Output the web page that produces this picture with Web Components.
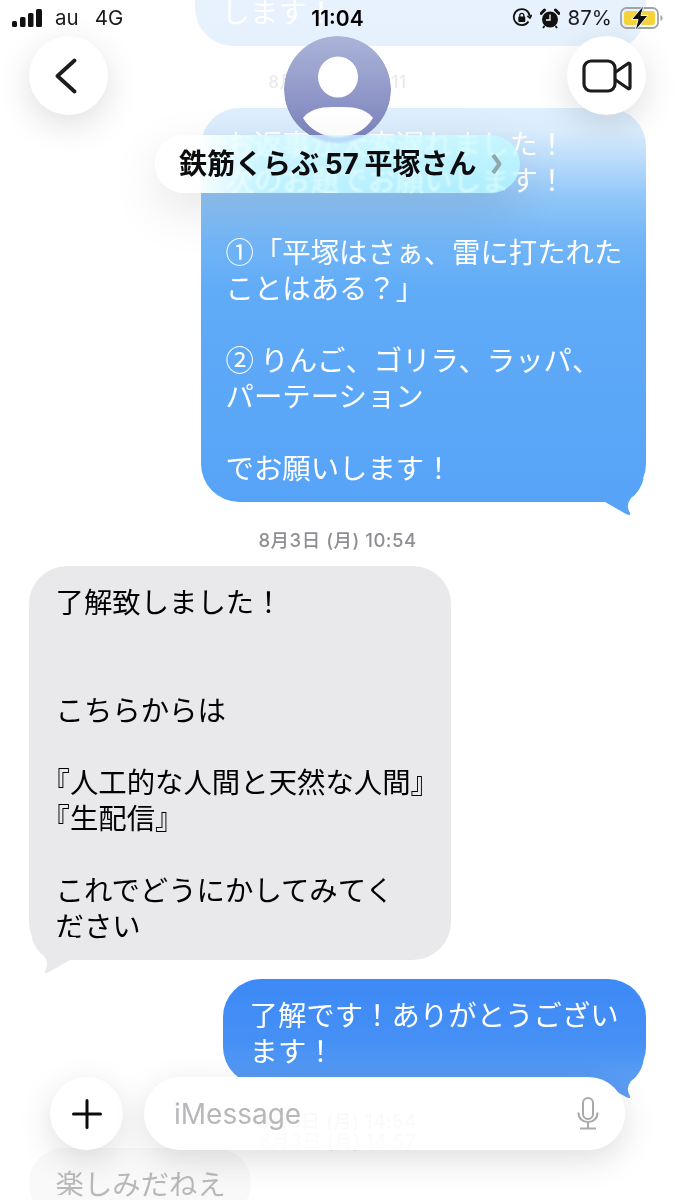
<!DOCTYPE html>
<html lang="ja"><head><meta charset="utf-8"><title>Messages</title>
<style>html,body{margin:0;padding:0;background:#fff;height:1200px;overflow:hidden}</style></head>
<body>
<msg-screen>
  <msg-thread>
    <msg-bubble kind="me" style="--w:451px;--from:#5aa5f7;--to:#5aa5f7">お題の確認をよろしくお願い
します！</msg-bubble>
    <msg-stamp style="--h:62px;--pt:10px;--fs:17px">8月3日 (月) 10:11</msg-stamp>
    <msg-bubble kind="me" style="--w:445px;--pad:24.5px;--from:#68b3f6;--to:#57a3f8">お返事が大変遅れました！
次のお題でお願いします！

①「平塚はさぁ、雷に打たれた
ことはある？」

② りんご、ゴリラ、ラッパ、
パーテーション

でお願いします！</msg-bubble>
    <msg-stamp style="--h:64px;--pt:12px">8月3日 (月) 10:54</msg-stamp>
    <msg-bubble kind="them" style="--w:422px">了解致しました！


こちらからは

<span style="margin-left:-14px">『人工的な人間と天然な人間』</span>
<span style="margin-left:-14px">『生配信』</span>

これでどうにかしてみてく
ださい</msg-bubble>
    <msg-stamp style="--h:19px"></msg-stamp>
    <msg-bubble kind="me" style="--w:423px;--from:#3d89f6;--to:#4c95f4">了解です！ありがとうござい
ます！</msg-bubble>
    <msg-stamp style="--h:46px;--align:flex-end">8月3日 (月) 14:54</msg-stamp>
    <msg-stamp style="--h:17px;--align:flex-start">8月3日 (月) 14:57</msg-stamp>
    <msg-bubble kind="them" style="--w:222px;--from:#e9e9eb;--to:#e9e9eb">楽しみだねえ</msg-bubble>
  </msg-thread>
  <msg-fade></msg-fade>
  <msg-header>
    <msg-status></msg-status>
    <msg-nav name="鉄筋くらぶ 57 平塚さん"></msg-nav>
  </msg-header>
  <msg-composer></msg-composer>
</msg-screen>
<script>
function el(name, html, extra){
  customElements.define(name, class extends HTMLElement{
    constructor(){super();this.attachShadow({mode:'open'}).innerHTML=html;}
    connectedCallback(){ if(extra) extra(this); }
  });
}
const UI='Inter,"Noto Sans CJK JP",sans-serif';
el('msg-screen',`<style>:host{display:block;position:relative;width:675px;height:1200px;overflow:hidden;background:#fff;font-family:"Noto Sans CJK JP",sans-serif}</style><slot></slot>`);
el('msg-thread',`<style>:host{display:flex;flex-direction:column;padding:0 29px 0 29px;margin-top:-60px}</style><slot></slot>`);
el('msg-stamp',`<style>:host{display:flex;box-sizing:border-box;padding-top:var(--pt,0);justify-content:center;align-items:var(--align,center);height:var(--h,40px);font:500 var(--fs,18.500px)/20px ${UI};color:#8e8e93;letter-spacing:.5px;white-space:nowrap}</style><slot></slot>`);
el('msg-bubble',`<style>
:host{display:block;position:relative;width:var(--w);box-sizing:border-box;padding:17px 0 17px var(--pad,26.500px);border-radius:38px;font-size:28.400px;line-height:36px;white-space:pre;flex:none}
:host([kind=me]){align-self:flex-end;color:#fff;background:linear-gradient(var(--from),var(--to))}
:host([kind=them]){align-self:flex-start;color:#000;background:var(--from,#e9e9eb)}
svg{position:absolute;bottom:-14px;width:50px;height:41px}
:host([kind=me]) svg{right:-3px}
:host([kind=them]) svg{left:-3px;transform:scaleX(-1)}
:host([kind=me]) path{fill:var(--to)}
:host([kind=them]) path{fill:#e9e9eb}
</style><slot></slot><svg viewBox="0 0 50 41"><path d="M6 27 L27 39 Q33 41.500 30.500 37 Q26.500 30 32 23 Q41 17 44.500 4 L0 4 Z"/></svg>`);
el('msg-fade',`<style>:host{position:absolute;inset:0;display:block;pointer-events:none;background:
linear-gradient(rgba(255,255,255,.86) 0,rgba(255,255,255,.84) 60px,rgba(255,255,255,.76) 130px,rgba(255,255,255,.3) 195px,rgba(255,255,255,.1) 240px,rgba(255,255,255,0) 290px),
linear-gradient(to top,rgba(255,255,255,.72) 0,rgba(255,255,255,.72) 50px,rgba(255,255,255,.1) 100px,rgba(255,255,255,0) 160px) bottom/100% 160px no-repeat}</style>`);
el('msg-header',`<style>:host{position:absolute;left:0;top:0;right:0;display:block}</style><slot></slot>`);
el('msg-status',`<style>
:host{display:grid;grid-template-columns:1fr auto 1fr;align-items:center;height:36px;padding:0 12px;font:400 20.500px/1 ${UI};color:#1b1b1d}
.l,.r{display:flex;align-items:center}
.l span{margin-left:13px}.l span+span{margin-left:16px}
.t{font-weight:600;font-size:21px;color:#000}
.r{justify-content:flex-end}
svg{display:block}
</style>
<div class="l"><svg width="30" height="18" viewBox="0 0 30 18"><rect x="0" y="12" width="5" height="6" rx="1.500" fill="#111"/><rect x="8" y="8" width="5.500" height="10" rx="1.500" fill="#111"/><rect x="16" y="4" width="5.500" height="14" rx="1.500" fill="#111"/><rect x="24" y="0" width="6" height="18" rx="1.500" fill="#111"/></svg><span>au</span><span>4G</span></div>
<div class="t">11:04</div>
<div class="r">
<svg width="20" height="20" viewBox="0 0 20 20" fill="none" stroke="#111" stroke-width="1.800"><path d="M16.500 13.500A8 8 0 1 1 17.800 8.500"/><path d="M15.300 7.800l2.700 2.200 1.800-3" stroke-width="1.500"/><rect x="6.300" y="8.500" width="7" height="5.500" rx="1" fill="#111" stroke="none"/><path d="M7.800 9V7.300a2 2 0 0 1 4 0V9" stroke-width="1.300"/></svg>
<svg style="margin-left:8px" width="20" height="21" viewBox="0 0 20 21"><circle cx="10" cy="11.500" r="8" fill="#111"/><path d="M1 5.500L4.500 2 M15.500 2l3.500 3.500" stroke="#111" stroke-width="3" stroke-linecap="round"/><path d="M10 6.500v5.500H6" stroke="#fff" stroke-width="1.300" fill="none"/><path d="M4.500 18l-1.500 2M15.500 18l1.500 2" stroke="#111" stroke-width="1.800"/></svg>
<span style="margin-left:8px">87%</span>
<svg style="margin-left:8px" width="43" height="26" viewBox="0 0 43 26"><rect x="1" y="3" width="37" height="20" rx="5.500" fill="none" stroke="#a3a3a6" stroke-width="1.800"/><rect x="4" y="6" width="31" height="14" rx="3" fill="#f6d23c"/><path d="M40.500 10v6c1.300-.5 2-1.700 2-3s-.7-2.500-2-3z" fill="#a3a3a6"/><path d="M24 0L11.500 14.500h6.500L15 26 28 10.500H21z" fill="#111" stroke="#f3f7fb" stroke-width="1"/></svg>
</div>`);
el('msg-nav',`<style>
:host{display:block;position:relative;height:157px;}
.row{display:flex;justify-content:space-between;padding:0 29px;}
.c{width:79px;height:79px;border-radius:50%;background:#fff;box-shadow:0 10px 34px rgba(0,0,0,.13);display:flex;align-items:center;justify-content:center}
.mid{position:absolute;left:0;right:0;top:0;display:flex;flex-direction:column;align-items:center}
.avatar{display:block;border-radius:50%}
.pill{margin-top:-8px;height:58px;box-sizing:border-box;width:365px;border-radius:29px;display:flex;align-items:center;padding-left:24px;gap:15px;background:linear-gradient(90deg,rgba(255,255,255,.98) 0,rgba(255,255,255,.96) 12%,rgba(218,252,255,.74) 30%,rgba(200,250,253,.7) 100%);backdrop-filter:blur(1px) saturate(2);box-shadow:0 18px 50px rgba(0,0,0,.1);font:700 28px/1 Inter,"Noto Sans CJK JP",sans-serif;word-spacing:-1px;color:#0c0c0e;white-space:nowrap}
svg{display:block}
.back{margin-right:5px}
</style>
<div class="row">
<div class="c"><svg class="back" width="24" height="36" viewBox="0 0 24 36" fill="none" stroke="#1c1c1e" stroke-width="3.800" stroke-linecap="round" stroke-linejoin="round"><path d="M20.500 2.500L3.500 18 20.500 33.500"/></svg></div>
<div class="c"><svg width="50" height="34" viewBox="0 0 50 34" fill="none" stroke="#1c1c1e" stroke-width="3.200" stroke-linejoin="round"><rect x="2" y="2" width="31" height="30" rx="7"/><path d="M33 13.500L46 4.500c1-.6 2-.2 2 1v23c0 1.200-1 1.600-2 1L33 20.500"/></svg></div>
</div>
<div class="mid">
<svg class="avatar" width="107" height="107" viewBox="0 0 107 107"><defs><linearGradient id="g" x1="0" y1="0" x2="0" y2="1"><stop offset="0" stop-color="#abb4d8"/><stop offset="1" stop-color="#7a80bb"/></linearGradient></defs><circle cx="53.500" cy="53.500" r="53.500" fill="url(#g)"/><ellipse cx="54" cy="41" rx="20" ry="20.500" fill="#fff"/><path d="M19 82C28 71 40 71 54 71S80 71 89 82C82 94 69 101 54 101S26 94 19 82Z" fill="#fff"/></svg>
<div class="pill"><span id="n"></span><svg width="11" height="22" viewBox="0 0 11 22"><path d="M2 2L8.500 11 2 20" fill="none" stroke="#8fa8ad" stroke-width="4" stroke-linejoin="round"/></svg></div>
</div>`, h=>{h.shadowRoot.getElementById('n').textContent=h.getAttribute('name')});
el('msg-composer',`<style>
:host{position:absolute;left:50px;top:1077px;width:575px;display:flex;gap:21px;font:400 28px/1 Inter,sans-serif}
.plus{width:73px;height:73px;border-radius:50%;background:#fff;box-shadow:0 10px 34px rgba(0,0,0,.13);display:flex;align-items:center;justify-content:center;flex:none}
.field{flex:1;height:73px;border-radius:37px;background:linear-gradient(#fff 0,#fff 14px,rgba(255,255,255,.93) 26px);box-shadow:0 10px 34px rgba(0,0,0,.13);display:flex;align-items:center;justify-content:space-between;padding:0 26px 0 30px;color:#b8b8bb}
svg{display:block}
</style>
<div class="plus"><svg width="30" height="30" viewBox="0 0 30 30"><path d="M15 1.500v27M1.500 15h27" stroke="#0c0c0e" stroke-width="3" stroke-linecap="round"/></svg></div>
<div class="field"><span>iMessage</span><svg width="22" height="33" viewBox="0 0 22 33" fill="none" stroke="#a9a9ac" stroke-width="2"><rect x="6" y="1" width="10" height="21" rx="5"/><path d="M1.500 15.500c0 6 4 9.500 9.500 9.500s9.500-3.500 9.500-9.500M11 25v6M3 31.500h16"/></svg></div>`);
</script>
</body></html>
